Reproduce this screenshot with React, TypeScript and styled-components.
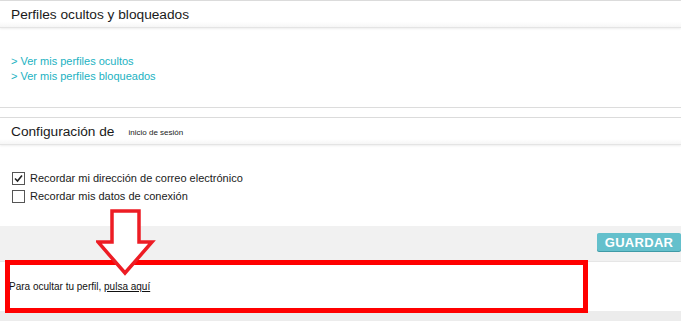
import React from "react";
import styled, { createGlobalStyle } from "styled-components";

const Global = createGlobalStyle`
  html, body { margin: 0; padding: 0; background: #fff; }
  body { font-family: "Liberation Sans", Arial, sans-serif; color: #111; }
`;

const Page = styled.div`
  position: relative;
  width: 681px;
  overflow: hidden;
  height: 321px;
`;

const Section = styled.section`
  border-top: 1px solid #dcdcdc;
`;

const Header = styled.div`
  height: 26px;
  display: flex;
  align-items: center;
  gap: 14px;
  padding-left: 11px;
  font-size: 13.7px;
  color: #1a1a1a;
  background: linear-gradient(#fff 80%, #f6f6f6);
  border-bottom: 1px solid #e4e4e4;
  box-shadow: 0 1px 2px rgba(0, 0, 0, 0.07);
`;

const Small = styled.span`
  font-size: 8px;
  color: #222;
  padding-top: 3px;
`;

const Body = styled.div<{ $h: number; $pt: number }>`
  height: ${(p) => p.$h}px;
  padding: ${(p) => p.$pt}px 0 0 11px;
  box-sizing: border-box;
`;

const Spacer = styled.div`
  height: 9px;
`;

const LinkList = styled.div`
  display: flex;
  flex-direction: column;
`;

const Link = styled.a`
  font-size: 11px;
  line-height: 15px;
  color: #21b2c2;
  text-decoration: none;
`;

const OptionRow = styled.label`
  display: flex;
  align-items: center;
  gap: 5px;
  height: 18px;
  font-size: 11px;
  color: #1a1a1a;
`;

const Box = styled.span`
  width: 11px;
  height: 11px;
  margin-left: 1px;
  border: 1px solid #555;
  display: inline-flex;
  align-items: center;
  justify-content: center;
  background: #fff;
`;

const Footer = styled.div`
  height: 35px;
  background: #f1f1f1;
  display: flex;
  justify-content: flex-end;
  align-items: flex-start;
  padding-top: 7px;
  box-sizing: border-box;
`;

const Button = styled.button`
  width: 84px;
  height: 18px;
  border: none;
  border-radius: 2px;
  background: #64c0cc;
  box-shadow: 0 1px 0 #3f9aa6;
  color: #fff;
  font-family: "Liberation Sans", Arial, sans-serif;
  font-weight: bold;
  font-size: 13px;
  letter-spacing: 0.3px;
  padding: 0;
`;

const NoticeArea = styled.div`
  height: 50px;
  border-top: 1px solid #e6e6e6;
  background: #fff;
  padding-left: 9px;
  box-sizing: border-box;
  display: flex;
  align-items: center;
  font-size: 10px;
  color: #111;
`;

const Under = styled.span`
  text-decoration: underline;
`;

const BottomBand = styled.div`
  height: 10px;
  background: #ececec;
`;

const Highlight = styled.div`
  position: absolute;
  left: 5px;
  top: 260px;
  width: 583px;
  height: 53px;
  border: 5px solid #ff0000;
  box-sizing: border-box;
`;

const ArrowSvg = styled.svg`
  position: absolute;
  left: 96px;
  top: 209px;
`;

function Arrow() {
  return (
    <ArrowSvg width="60" height="68" viewBox="0 0 60 68">
      <polygon
        points="16,2 43,2 43,33 56,33 29,64 2,33 16,33"
        fill="#fff"
        stroke="#ed1c24"
        strokeWidth="3.5"
        strokeLinejoin="miter"
      />
    </ArrowSvg>
  );
}

function Check() {
  return (
    <svg width="9" height="9" viewBox="0 0 9 9">
      <path d="M1 4.5 L3.5 7 L8 1.5" fill="none" stroke="#222" strokeWidth="1.6" />
    </svg>
  );
}

export default function App() {
  return (
    <>
      <Global />
      <Page>
        <Section>
          <Header>Perfiles ocultos y bloqueados</Header>
          <Body $h={79} $pt={26}>
            <LinkList>
              <Link>&gt; Ver mis perfiles ocultos</Link>
              <Link>&gt; Ver mis perfiles bloqueados</Link>
            </LinkList>
          </Body>
        </Section>
        <Section>
          <Spacer />
        </Section>
        <Section>
          <Header>
            Configuración de <Small>inicio de sesión</Small>
          </Header>
          <Body $h={81} $pt={24}>
            <OptionRow>
              <Box>
                <Check />
              </Box>
              Recordar mi dirección de correo electrónico
            </OptionRow>
            <OptionRow>
              <Box />
              Recordar mis datos de conexión
            </OptionRow>
          </Body>
          <Footer>
            <Button>GUARDAR</Button>
          </Footer>
          <NoticeArea>
            <span>
              Para ocultar tu perfil, <Under>pulsa aquí</Under>
            </span>
          </NoticeArea>
          <BottomBand />
        </Section>
        <Highlight />
        <Arrow />
      </Page>
    </>
  );
}
